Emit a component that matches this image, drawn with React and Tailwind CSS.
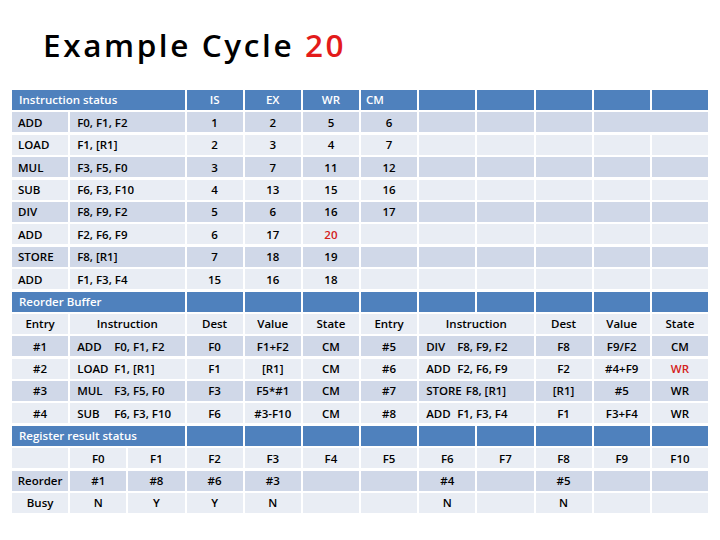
import React from "react";

const HEAD = "bg-[#4F81BD] text-white";
const DARK = "bg-[#D0D8E8]";
const LIGHT = "bg-[#E9EDF4]";

const Cell = ({ bg, span2, span3, left, red, pad = "pl-[7px]", children }) => (
  <div
    className={`${bg} ${span2 ? "col-span-2" : ""} ${span3 ? "col-span-3" : ""} flex items-center whitespace-nowrap ${
      left ? `justify-start ${pad}` : "justify-center"
    } ${red ? "text-[#D42020]" : ""}`}
  >
    {children}
  </div>
);

const Instr = ({ op, args, opWidth }) => (
  <span className="flex">
    <span className={`${opWidth} pr-[4px]`}>{op}</span>
    <span>{args}</span>
  </span>
);

const statusRows = [
  ["ADD", "F0, F1, F2", "1", "2", "5", "6"],
  ["LOAD", "F1, [R1]", "2", "3", "4", "7"],
  ["MUL", "F3, F5, F0", "3", "7", "11", "12"],
  ["SUB", "F6, F3, F10", "4", "13", "15", "16"],
  ["DIV", "F8, F9, F2", "5", "6", "16", "17"],
  ["ADD", "F2, F6, F9", "6", "17", "20", ""],
  ["STORE", "F8, [R1]", "7", "18", "19", ""],
  ["ADD", "F1, F3, F4", "15", "16", "18", ""],
];

const robRows = [
  [["#1", "ADD", "F0, F1, F2", "F0", "F1+F2", "CM"], ["#5", "DIV", "F8, F9, F2", "F8", "F9/F2", "CM"]],
  [["#2", "LOAD", "F1, [R1]", "F1", "[R1]", "CM"], ["#6", "ADD", "F2, F6, F9", "F2", "#4+F9", "WR"]],
  [["#3", "MUL", "F3, F5, F0", "F3", "F5*#1", "CM"], ["#7", "STORE", "F8, [R1]", "[R1]", "#5", "WR"]],
  [["#4", "SUB", "F6, F3, F10", "F6", "#3-F10", "CM"], ["#8", "ADD", "F1, F3, F4", "F1", "F3+F4", "WR"]],
];

const regNames = ["F0", "F1", "F2", "F3", "F4", "F5", "F6", "F7", "F8", "F9", "F10"];
const regReorder = ["#1", "#8", "#6", "#3", "", "", "#4", "", "#5", "", ""];
const regBusy = ["N", "Y", "Y", "N", "", "", "N", "", "N", "", ""];

const blanks = (n, bg, key) =>
  Array.from({ length: n }, (_, i) => <Cell key={`${key}-${i}`} bg={bg} />);

export default function App() {
  return (
    <div className="w-[720px] h-[540px] bg-white pt-[29px] font-['Open_Sans',sans-serif] text-black">
      {/* Title */}
      <h1 className="pl-[43px] h-[32px] leading-[32px] text-[31.5px] font-semibold tracking-[2.6px]">
        Example Cycle <span className="text-[#E31B1B]">20</span>
      </h1>

      <div className="mt-[29px] ml-[12px] w-[696px] grid grid-cols-12 gap-x-[2px] gap-y-[2.4px] auto-rows-[20px] text-[11.5px] font-semibold">
        {/* Instruction status */}
        <Cell bg={HEAD} span3 left>Instruction status</Cell>
        <Cell bg={HEAD}>IS</Cell>
        <Cell bg={HEAD}>EX</Cell>
        <Cell bg={HEAD}>WR</Cell>
        <Cell bg={HEAD} left pad="pl-[5px]">CM</Cell>
        {blanks(5, HEAD, "h1")}

        {statusRows.map((r, i) => {
          const bg = i % 2 === 0 ? DARK : LIGHT;
          return (
            <React.Fragment key={i}>
              <Cell bg={bg} left pad="pl-[6px]">{r[0]}</Cell>
              <Cell bg={bg} span2 left>{r[1]}</Cell>
              <Cell bg={bg}>{r[2]}</Cell>
              <Cell bg={bg}>{r[3]}</Cell>
              <Cell bg={bg} red={r[4] === "20"}>{r[4]}</Cell>
              <Cell bg={bg}>{r[5]}</Cell>
              {i === 0 ? (
                <>
                  {blanks(3, bg, `s${i}`)}
                  <Cell bg={bg} span2 />
                </>
              ) : (
                blanks(5, bg, `s${i}`)
              )}
            </React.Fragment>
          );
        })}

        {/* Reorder buffer */}
        <Cell bg={HEAD} span3 left>Reorder Buffer</Cell>
        {blanks(9, HEAD, "h2")}

        <Cell bg={LIGHT}>Entry</Cell>
        <Cell bg={LIGHT} span2>Instruction</Cell>
        <Cell bg={LIGHT}>Dest</Cell>
        <Cell bg={LIGHT}>Value</Cell>
        <Cell bg={LIGHT}>State</Cell>
        <Cell bg={LIGHT}>Entry</Cell>
        <Cell bg={LIGHT} span2>Instruction</Cell>
        <Cell bg={LIGHT}>Dest</Cell>
        <Cell bg={LIGHT}>Value</Cell>
        <Cell bg={LIGHT}>State</Cell>

        {robRows.map(([a, b], i) => {
          const bg = i % 2 === 0 ? DARK : LIGHT;
          return (
            <React.Fragment key={`rob${i}`}>
              <Cell bg={bg}>{a[0]}</Cell>
              <Cell bg={bg} span2 left>
                <Instr op={a[1]} args={a[2]} opWidth="min-w-[37px]" />
              </Cell>
              <Cell bg={bg}>{a[3]}</Cell>
              <Cell bg={bg}>{a[4]}</Cell>
              <Cell bg={bg}>{a[5]}</Cell>
              <Cell bg={bg}>{b[0]}</Cell>
              <Cell bg={bg} span2 left>
                <Instr op={b[1]} args={b[2]} opWidth="min-w-[31px]" />
              </Cell>
              <Cell bg={bg}>{b[3]}</Cell>
              <Cell bg={bg}>{b[4]}</Cell>
              <Cell bg={bg} red={i === 1}>{b[5]}</Cell>
            </React.Fragment>
          );
        })}

        {/* Register result status */}
        <Cell bg={HEAD} span3 left>Register result status</Cell>
        {blanks(9, HEAD, "h3")}

        <Cell bg={LIGHT} />
        {regNames.map((n) => (
          <Cell key={n} bg={LIGHT}>{n}</Cell>
        ))}

        <Cell bg={DARK}>Reorder</Cell>
        {regReorder.map((v, i) => (
          <Cell key={`ro${i}`} bg={DARK}>{v}</Cell>
        ))}

        <Cell bg={LIGHT}>Busy</Cell>
        {regBusy.map((v, i) => (
          <Cell key={`b${i}`} bg={LIGHT}>{v}</Cell>
        ))}
      </div>
    </div>
  );
}
